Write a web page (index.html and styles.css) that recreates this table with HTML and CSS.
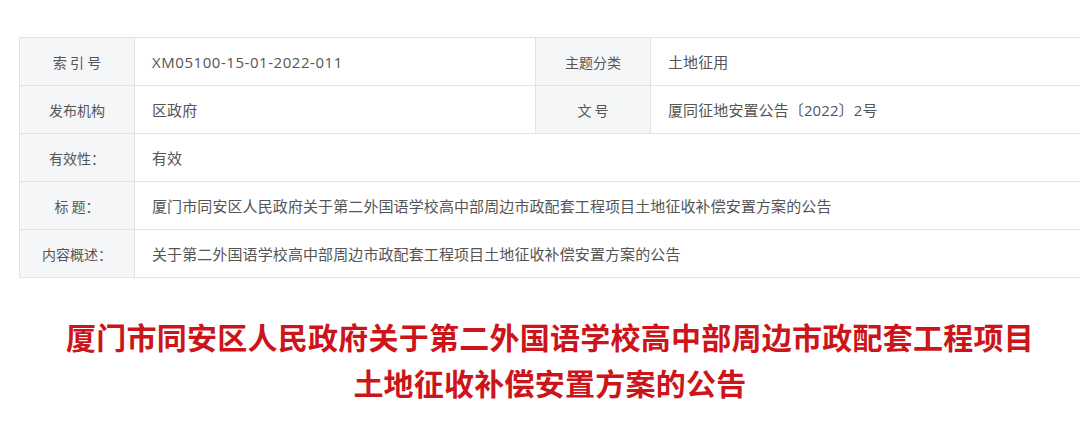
FILE: index.html
```html
<!DOCTYPE html>
<html lang="zh-CN">
<head>
  <meta charset="UTF-8">
  <meta name="viewport" content="width=device-width, initial-scale=1.0">
  <title>土地征收补偿安置方案的公告</title>
  <link rel="stylesheet" href="styles.css">
</head>
<body>
  <div class="page">
    <table class="info-table">
      <colgroup>
        <col class="col-label">
        <col class="col-value">
        <col class="col-label">
        <col class="col-value-wide">
      </colgroup>
      <tr>
        <th>索 引 号</th>
        <td class="code">XM05100-15-01-2022-011</td>
        <th>主题分类</th>
        <td>土地征用</td>
      </tr>
      <tr>
        <th>发布机构</th>
        <td>区政府</td>
        <th>文 号</th>
        <td>厦同征地安置公告〔2022〕2号</td>
      </tr>
      <tr>
        <th>有效性：</th>
        <td colspan="3">有效</td>
      </tr>
      <tr>
        <th>标 题：</th>
        <td colspan="3">厦门市同安区人民政府关于第二外国语学校高中部周边市政配套工程项目土地征收补偿安置方案的公告</td>
      </tr>
      <tr>
        <th>内容概述：</th>
        <td colspan="3">关于第二外国语学校高中部周边市政配套工程项目土地征收补偿安置方案的公告</td>
      </tr>
    </table>

    <h1 class="notice-title">厦门市同安区人民政府关于第二外国语学校高中部周边市政配套工程项目<br>土地征收补偿安置方案的公告</h1>
  </div>
</body>
</html>
```

FILE: styles.css
```css
* {
  box-sizing: border-box;
  margin: 0;
  padding: 0;
}
body {
  font-family: "Noto Sans CJK SC", "Noto Sans", sans-serif;
  background-color: #fff;
  color: #555;
  overflow: hidden;
}
.page {
  width: 1062px;
  margin-left: 19px;
  padding-top: 37px;
}
.info-table {
  width: 100%;
  border-collapse: collapse;
  table-layout: fixed;
  font-size: 14px;
}
.col-label {
  width: 115px;
}
.col-value {
  width: 401px;
}
.info-table th,
.info-table td {
  height: 48px;
  border: 1px solid #e3e3e3;
  font-weight: normal;
  white-space: nowrap;
}
.info-table th {
  background-color: #f5f6f7;
  color: #555;
  text-align: center;
}
.info-table td {
  padding-left: 17px;
  color: #555;
  text-align: left;
  font-family: "Open Sans", "Noto Sans CJK SC", sans-serif;
  font-size: 15px;
  letter-spacing: 0.1px;
}
.info-table td.code {
  letter-spacing: 0.55px;
}
.notice-title {
  margin-top: 35px;
  text-align: center;
  color: #cc1419;
  font-size: 30px;
  font-weight: 700;
  line-height: 46px;
  letter-spacing: 0.25px;
}
```
